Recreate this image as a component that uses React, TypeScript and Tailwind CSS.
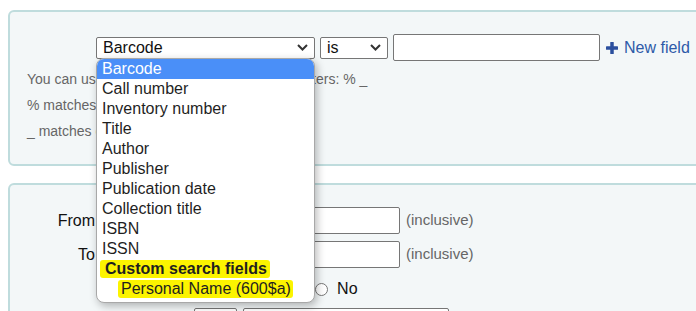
import React from 'react'

const options = [
  'Barcode',
  'Call number',
  'Inventory number',
  'Title',
  'Author',
  'Publisher',
  'Publication date',
  'Collection title',
  'ISBN',
  'ISSN',
]

function Chevron() {
  return (
    <svg width="11" height="7" viewBox="0 0 11 7" className="shrink-0">
      <polyline points="1,1 5.5,5.5 10,1" fill="none" stroke="#333" strokeWidth="2" />
    </svg>
  )
}

function SelectBox({ label, width }: { label: string; width: string }) {
  return (
    <div
      className={`${width} flex h-[22px] items-center justify-between rounded-[2px] border border-[#767676] bg-white pl-[6px] pr-[6px] text-[16px] text-[#111]`}
    >
      <span>{label}</span>
      <Chevron />
    </div>
  )
}

function Dropdown() {
  return (
    <div className="absolute left-0 top-[21px] z-10 w-[219px] overflow-hidden rounded-lg border border-[#a8a8a8] bg-white pb-[3px] text-[16px] leading-[20px] text-[#1f1f1f] shadow-[2px_3px_8px_rgba(0,0,0,0.28)]">
      {options.map((opt, i) => (
        <div
          key={opt}
          className={`h-[20px] px-[5px] ${i === 0 ? 'bg-[#4a8ff8] text-white' : ''}`}
        >
          {opt}
        </div>
      ))}
      {/* optgroup */}
      <div className="flex h-[20px] items-center pl-[3px]">
        <span className="inline-block h-[18px] rounded-[3px] bg-[#fcf400] pl-[5px] pr-[3px] font-bold leading-[18px]">
          Custom search fields
        </span>
      </div>
      <div className="flex h-[20px] items-center pl-[21px]">
        <span className="inline-block h-[18px] rounded-[3px] bg-[#fcf400] pl-[3px] pr-[2px] leading-[18px]">
          Personal Name (600$a)
        </span>
      </div>
    </div>
  )
}

function Radio() {
  return <span className="inline-block h-[13px] w-[13px] rounded-full border border-[#767676] bg-white" />
}

export default function App() {
  return (
    <div className="h-[311px] w-[696px] overflow-hidden bg-white pl-[8px] pt-[10px] font-['Liberation_Sans',Arial,sans-serif]">
      {/* Search fields panel */}
      <div className="-mr-8 h-[156px] rounded-md border-2 border-[#bfdcdd] bg-[#f3f7f8] pl-[17px] pt-[22px]">
        <div className="flex items-center gap-[5px] pl-[69px]">
          <div className="relative">
            <SelectBox label="Barcode" width="w-[219px]" />
            <Dropdown />
          </div>
          <SelectBox label="is" width="w-[68px]" />
          <div className="h-[27px] w-[207px] rounded-[2px] border border-[#767676] bg-white" />
          <a className="flex items-center gap-[6px] pl-[1px] text-[16px] text-[#2d5aa8]">
            <svg width="12" height="12" viewBox="0 0 12 12">
              <rect x="4.25" y="0" width="3.5" height="12" rx="0.6" fill="#2b4f9e" />
              <rect x="0" y="4.25" width="12" height="3.5" rx="0.6" fill="#2b4f9e" />
            </svg>
            New field
          </a>
        </div>
        <div className="mt-[8px] space-y-[6px] text-[14px] leading-[20px] text-[#666]">
          <p>You can use the following two wildcard characters: % _</p>
          <p>% matches any number of characters</p>
          <p>_ matches only a single character</p>
        </div>
      </div>

      {/* Range panel */}
      <div className="-mr-8 mt-[17px] h-[200px] rounded-md border-2 border-[#bfdcdd] bg-[#f3f7f8] pt-[22px] text-[16px] text-[#111]">
        <div className="flex items-center gap-[6px]">
          <label className="w-[85px] text-right">From</label>
          <div className="h-[27px] w-[299px] rounded-[2px] border border-[#767676] bg-white" />
          <span className="text-[15px] text-[#666]">(inclusive)</span>
        </div>
        <div className="mt-[7px] flex items-center gap-[6px]">
          <label className="w-[85px] text-right">To</label>
          <div className="h-[27px] w-[299px] rounded-[2px] border border-[#767676] bg-white" />
          <span className="text-[15px] text-[#666]">(inclusive)</span>
        </div>
        <div className="mt-[11px] flex h-[20px] items-center pl-[245px]">
          <Radio />
          <span className="ml-[9px]">Yes</span>
          <span className="ml-[12px] flex items-center">
            <Radio />
          </span>
          <span className="ml-[9px]">No</span>
        </div>
        <div className="mt-[9px] flex gap-[6px] pl-[184px]">
          <div className="h-[24px] w-[43px] rounded-[2px] border border-[#767676] bg-white" />
          <div className="h-[24px] w-[206px] rounded-[2px] border border-[#767676] bg-white" />
        </div>
      </div>
    </div>
  )
}
